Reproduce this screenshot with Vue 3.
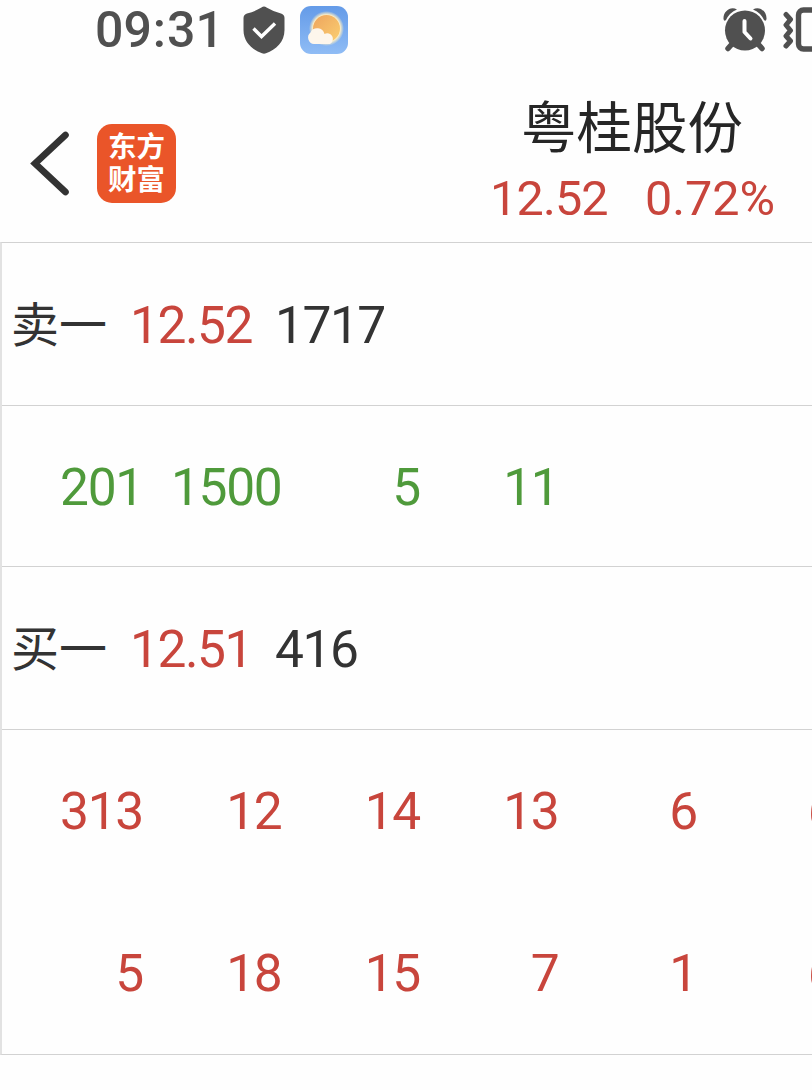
<script setup>
import { ref } from 'vue'

const stock = ref({ name: '粤桂股份', price: '12.52', change: '0.72%' })

const sell = ref({ label: '卖一', price: '12.52', volume: '1717' })
const buy = ref({ label: '买一', price: '12.51', volume: '416' })

const sellOrders = ref([['201', '1500', '5', '11']])
const buyOrders = ref([
  ['313', '12', '14', '13', '6', '6'],
  ['5', '18', '15', '7', '1', '6']
])
</script>

<template>
  <div class="screen">

    <!-- status bar -->
    <div class="status">
      <span class="clock">09<i>:</i>31</span>
      <svg class="shield" viewBox="0 0 42 48">
        <path d="M21 0.5 Q22 0.5 24 1.8 Q30 5.5 38 7.5 Q41.5 8.5 41.5 12 V24 C41.5 36 33 43.5 23 47.3 Q21 48 19 47.3 C9 43.5 0.5 36 0.5 24 V12 Q0.5 8.5 4 7.5 Q12 5.5 18 1.8 Q20 0.5 21 0.5Z" fill="#505050" />
        <path d="M10.5 22.5 L18.5 30.5 L32 17.5" fill="none" stroke="#fff" stroke-width="3.4" />
      </svg>
      <svg class="weather" viewBox="0 0 48 48">
        <defs>
          <linearGradient id="sky" x1="0" y1="0" x2="0" y2="1">
            <stop offset="0" stop-color="#649be8" />
            <stop offset="1" stop-color="#8fbcf5" />
          </linearGradient>
          <linearGradient id="sun" x1="0" y1="0" x2="1" y2="1">
            <stop offset="0" stop-color="#eda45e" />
            <stop offset="1" stop-color="#fbcf70" />
          </linearGradient>
          <radialGradient id="glow">
            <stop offset="0.78" stop-color="#fff0c4" />
            <stop offset="1" stop-color="#fff0c4" stop-opacity="0" />
          </radialGradient>
        </defs>
        <rect width="48" height="48" rx="11" fill="url(#sky)" />
        <circle cx="26.5" cy="22.5" r="17.5" fill="url(#glow)" />
        <circle cx="26.5" cy="22.5" r="13.5" fill="url(#sun)" />
        <path d="M14 38 A6.5 6.5 0 0 1 10.5 26.5 A7.5 7.5 0 0 1 24.5 28 A5.2 5.2 0 0 1 30 38Z" fill="#fdf6ec" />
      </svg>
      <svg class="alarm" viewBox="0 0 44 46">
        <path d="M0.5 12 C0 4 8 -1.5 14 2.5 Q6.5 5.5 3 13 Q1 15 0.5 12Z" fill="#505050" />
        <path d="M43.5 12 C44 4 36 -1.5 30 2.5 Q37.5 5.5 41 13 Q43 15 43.5 12Z" fill="#505050" />
        <path d="M9 37 L5 41.5 M35 37 L39 41.5" fill="none" stroke="#505050" stroke-width="5.5" stroke-linecap="round" />
        <circle cx="22" cy="23.5" r="20" fill="#505050" />
        <path d="M21.5 14 V25 L27.5 31.5" fill="none" stroke="#fff" stroke-width="4" stroke-linecap="round" stroke-linejoin="round" />
      </svg>
      <svg class="vibrate" viewBox="0 0 34 46">
        <path d="M3 7.5 L7.5 12.5 L3 18 L7.5 23.5 L3 29 L7.5 34 L3 39" fill="none" stroke="#505050" stroke-width="5" stroke-linecap="round" stroke-linejoin="round" />
        <rect x="15.5" y="3" width="34" height="39" rx="5" fill="none" stroke="#505050" stroke-width="5.4" />
      </svg>
    </div>

    <!-- title bar -->
    <div class="header">
      <svg class="back" viewBox="0 0 40 66">
        <path d="M35.5 5 L5 33.5 L35.5 62" fill="none" stroke="#333" stroke-width="6.6" stroke-linecap="round" />
      </svg>
      <div class="logo">
        <span>东方</span>
        <span>财富</span>
      </div>
      <div class="stock">
        <div class="name">{{ stock.name }}</div>
        <div class="quote">
          <span class="last">{{ stock.price }}</span>
          <span>{{ stock.change }}</span>
        </div>
      </div>
    </div>

    <!-- order queue -->
    <div class="queue">
      <div class="level">
        <span class="label">{{ sell.label }}</span>
        <span class="price">{{ sell.price }}</span>
        <span class="volume">{{ sell.volume }}</span>
      </div>
      <div class="orders green">
        <div v-for="(row, r) in sellOrders" :key="r" class="row">
          <span v-for="(n, c) in row" :key="c">{{ n }}</span>
        </div>
      </div>
      <div class="level">
        <span class="label">{{ buy.label }}</span>
        <span class="price">{{ buy.price }}</span>
        <span class="volume">{{ buy.volume }}</span>
      </div>
      <div class="orders red">
        <div v-for="(row, r) in buyOrders" :key="r" class="row">
          <span v-for="(n, c) in row" :key="c">{{ n }}</span>
        </div>
      </div>
    </div>

  </div>
</template>

<style>
body {
  margin: 0;
  background: #fefefe;
}
</style>

<style scoped>
.screen {
  width: 812px;
  height: 1090px;
  overflow: hidden;
  background: #fefefe;
  color: #333;
  font-family: Roboto, "Noto Sans CJK SC", sans-serif;
}

/* status bar */
.status {
  display: flex;
  align-items: center;
  height: 60px;
  padding-left: 95px;
  box-sizing: border-box;
}

.status svg {
  flex: none;
}

.clock {
  flex: none;
  width: 148px;
  font-size: 50px;
  font-weight: 500;
  line-height: 60px;
  color: #505050;
}

.clock i {
  font-style: normal;
  margin: 0 1px;
}

.shield {
  width: 42px;
  height: 48px;
}

.weather {
  width: 48px;
  height: 48px;
  margin-left: 15px;
}

.alarm {
  width: 44px;
  height: 46px;
  margin-left: 375px;
}

.vibrate {
  width: 34px;
  height: 46px;
  margin-left: 16px;
}

/* title bar */
.header {
  display: flex;
  height: 182px;
  padding-left: 30px;
}

.back {
  flex: none;
  width: 40px;
  height: 66px;
  margin-top: 70px;
}

.logo {
  display: flex;
  flex-direction: column;
  justify-content: center;
  align-items: center;
  flex: none;
  width: 79px;
  height: 79px;
  margin: 64px 0 0 27px;
  border-radius: 15px;
  background: #ea5529;
  color: #fff;
  font-size: 28.5px;
  font-weight: 700;
  line-height: 33px;
}

.stock {
  width: 286px;
  margin-left: 313px;
  text-align: center;
}

.name {
  margin-top: 30px;
  font-size: 55.5px;
  line-height: 79px;
  color: #262626;
}

.quote {
  display: flex;
  justify-content: space-between;
  padding-left: 1px;
  line-height: 60px;
  font-size: 48.5px;
  color: #c8453c;
}

.last {
  letter-spacing: -0.8px;
}

/* order queue */
.queue {
  height: 813px;
  box-sizing: border-box;
  border-left: 2px solid #e2e2e2;
  border-top: 1px solid #d2d2d2;
  border-bottom: 1px solid #d2d2d2;
  font-size: 51.5px;
  letter-spacing: -1.3px;
  overflow: hidden;
}

.level {
  display: flex;
  align-items: center;
  height: 162px;
  padding-left: 9px;
  border-bottom: 1px solid #d2d2d2;
}

.label {
  width: 119px;
  padding-bottom: 6px;
  font-size: 48px;
  letter-spacing: 0;
}

.price {
  width: 145px;
  padding-top: 2px;
  letter-spacing: -1.5px;
  color: #c8453c;
}

.volume {
  padding-top: 2px;
  letter-spacing: -1.5px;
}

.orders.green {
  color: #4f9a3b;
  border-bottom: 1px solid #d2d2d2;
}

.orders.red {
  color: #c8453c;
}

.row {
  display: grid;
  grid-template-columns: 141px repeat(5, 138.5px);
  align-items: center;
  height: 160px;
  padding-top: 3px;
  box-sizing: border-box;
  text-align: right;
}

.red .row {
  height: 162px;
  padding-top: 0;
}
</style>
